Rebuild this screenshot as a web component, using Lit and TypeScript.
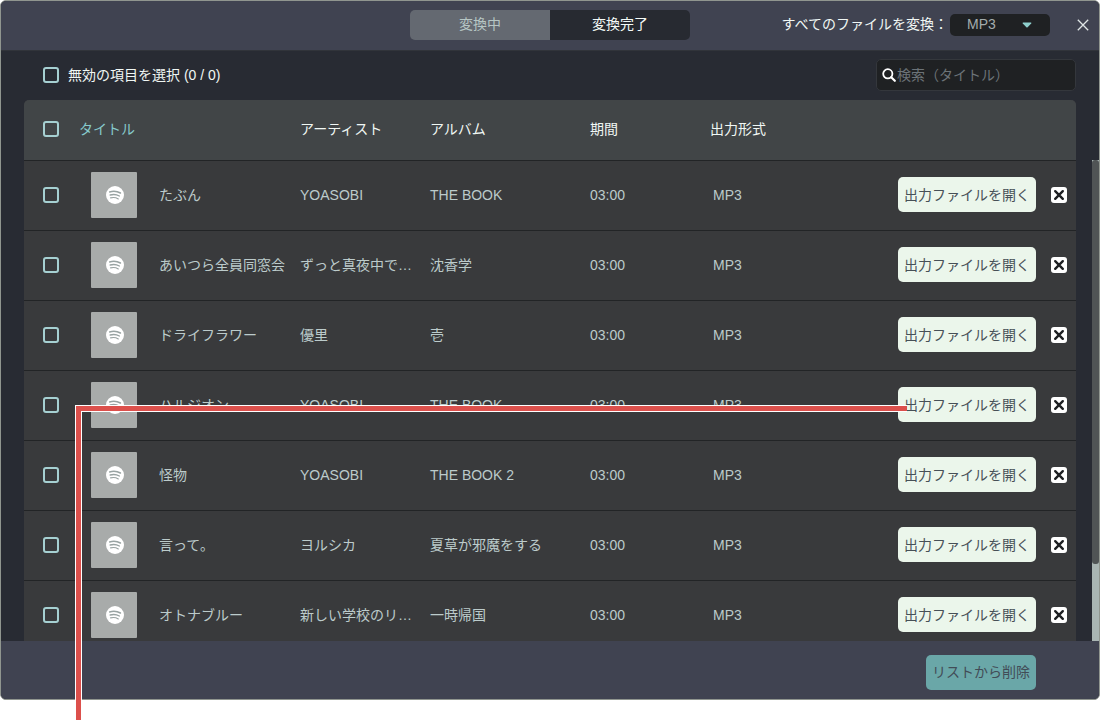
import { LitElement, html, css } from "lit";
import { customElement, state } from "lit/decorators.js";

interface Track {
  title: string;
  artist: string;
  album: string;
  duration: string;
  format: string;
}

const TRACKS: Track[] = [
  { title: "たぶん", artist: "YOASOBI", album: "THE BOOK", duration: "03:00", format: "MP3" },
  { title: "あいつら全員同窓会", artist: "ずっと真夜中で…", album: "沈香学", duration: "03:00", format: "MP3" },
  { title: "ドライフラワー", artist: "優里", album: "壱", duration: "03:00", format: "MP3" },
  { title: "ハルジオン", artist: "YOASOBI", album: "THE BOOK", duration: "03:00", format: "MP3" },
  { title: "怪物", artist: "YOASOBI", album: "THE BOOK 2", duration: "03:00", format: "MP3" },
  { title: "言って。", artist: "ヨルシカ", album: "夏草が邪魔をする", duration: "03:00", format: "MP3" },
  { title: "オトナブルー", artist: "新しい学校のリ…", album: "一時帰国", duration: "03:00", format: "MP3" },
];

@customElement("app-root")
export class AppRoot extends LitElement {
  @state() private tracks = TRACKS;

  static styles = css`
    :host {
      display: block;
      position: relative;
      box-sizing: border-box;
      height: 100vh;
      padding-bottom: 20px;
      overflow: hidden;
      background: #fff;
      font: 14px/20px "Liberation Sans", "Noto Sans CJK JP", sans-serif;
      color: #f0f7f4;
    }
    *,
    *::before,
    *::after {
      box-sizing: border-box;
    }
    button,
    input,
    select {
      margin: 0;
      font: inherit;
    }
    button {
      cursor: pointer;
    }
    svg {
      display: block;
    }

    .window {
      display: flex;
      flex-direction: column;
      height: 100%;
      overflow: hidden;
      border: 1px solid #90968f;
      border-radius: 6px;
      background: #282b33;
    }

    .titlebar {
      display: grid;
      grid-template-columns: 1fr auto 1fr;
      align-items: center;
      flex: none;
      height: 49px;
      padding-bottom: 2px;
      background: #404351;
    }
    .tabs {
      grid-column: 2;
      display: flex;
      height: 30px;
      border-radius: 5px;
      overflow: hidden;
    }
    .tab {
      width: 140px;
      padding: 0 0 2px;
      border: 0;
      background: #646971;
      color: #b6c6c4;
    }
    .tab.active {
      background: #272a31;
      color: #f4faf7;
    }
    .convert {
      display: flex;
      align-items: center;
      justify-content: flex-end;
      padding-right: 7px;
    }
    .convert label {
      margin-right: 2px;
      padding-bottom: 2px;
    }
    .picker {
      display: grid;
      align-items: center;
      width: 100px;
    }
    .picker > * {
      grid-area: 1 / 1;
    }
    .picker select {
      appearance: none;
      height: 22px;
      padding: 0 17px 2px;
      border: 0;
      border-radius: 5px;
      background: #1f2123;
      color: #a3acad;
    }
    .picker svg {
      justify-self: end;
      margin-right: 18px;
      pointer-events: none;
    }
    .close {
      margin-left: 24px;
      padding: 3px;
      border: 0;
      background: none;
      color: #dfe6e6;
    }

    .toolbar {
      display: flex;
      align-items: center;
      justify-content: space-between;
      flex: none;
      height: 50px;
      padding: 0 23px 2px 42px;
      border-top: 1px solid #31343a;
    }
    .select-all {
      display: flex;
      align-items: center;
      gap: 9px;
    }
    .check {
      appearance: none;
      display: block;
      flex: none;
      width: 16px;
      height: 16px;
      border: 2px solid #a6d0d2;
      border-radius: 3px;
    }
    .check:checked {
      background: #6aa8a9;
    }
    .search {
      display: flex;
      align-items: center;
      gap: 1px;
      width: 200px;
      height: 32px;
      padding: 0 5px;
      border: 1px solid #34373c;
      border-radius: 5px;
      background: #1f2123;
    }
    .search input {
      flex: 1;
      min-width: 0;
      padding: 0;
      border: 0;
      outline: 0;
      background: none;
      color: #d5dcdc;
    }
    .search input::placeholder {
      color: #6c7378;
      opacity: 1;
    }

    .body {
      display: flex;
      flex: 1;
      gap: 16px;
      min-height: 0;
      padding-left: 23px;
    }
    .list {
      flex: 1;
      min-width: 0;
      overflow: hidden;
      border-radius: 5px 5px 0 0;
      background: #393a3c;
    }
    table {
      width: 100%;
      table-layout: fixed;
      border-spacing: 0;
    }
    .col-check {
      width: 55px;
    }
    .col-title {
      width: 221px;
    }
    .col-artist {
      width: 130px;
    }
    .col-album {
      width: 160px;
    }
    .col-duration {
      width: 120px;
    }
    .col-action {
      width: 180px;
    }
    th,
    td {
      padding: 0 0 2px;
      text-align: left;
      vertical-align: middle;
      white-space: nowrap;
    }
    th {
      height: 60px;
      background: #414547;
      font-weight: 400;
    }
    th.sorted {
      color: #86c9cb;
    }
    td {
      height: 70px;
      border-top: 1px solid #222426;
      color: #bccbcb;
    }
    .check-cell {
      padding-left: 19px;
    }
    .format {
      padding-left: 3px;
    }
    .song {
      display: flex;
      align-items: center;
      gap: 22px;
      padding-left: 12px;
    }
    .cover {
      display: grid;
      place-items: center;
      width: 46px;
      height: 46px;
      border-radius: 1px;
      background: #a8abaa;
    }
    .actions {
      display: flex;
      align-items: center;
      justify-content: flex-end;
      gap: 15px;
      padding-right: 9px;
    }
    .btn {
      height: 35px;
      padding: 0 6px;
      border: 0;
      border-radius: 5px;
      background: #ebf6eb;
      color: #475057;
      white-space: nowrap;
    }
    .remove {
      padding: 0;
      border: 0;
      background: none;
    }

    .scrollbar {
      display: flex;
      flex: none;
      width: 7px;
      margin-top: 60px;
      background: #a9b5b3;
    }
    .thumb {
      width: 100%;
      height: 84%;
      border-radius: 3px;
      background: #505455;
    }

    .footer {
      display: flex;
      align-items: center;
      justify-content: flex-end;
      flex: none;
      height: 58px;
      padding: 4px 63px 0 0;
      background: #404351;
    }
    .btn.delete {
      background: #6aa7a8;
      color: #424c57;
    }

    .callout {
      position: absolute;
      top: 405px;
      right: 193px;
      bottom: 0;
      left: 75px;
      border: solid #fff;
      border-width: 1px 0 0 1px;
      pointer-events: none;
    }
    .callout-line {
      height: 100%;
      border: solid #dc504c;
      border-width: 5px 0 0 5px;
    }
    .callout-edge {
      height: 100%;
      border: solid #fff;
      border-width: 1px 0 0 1px;
    }
  `;

  private renderCover() {
    return html`<span class="cover">
      <svg width="20" height="20" viewBox="0 0 20 20" aria-hidden="true">
        <circle cx="11" cy="10" r="9" fill="#fff" />
        <g fill="none" stroke="#98a3a2" stroke-linecap="round">
          <path d="M5.7 6.9c3.6-1 7.6-.6 10.7 1.1" stroke-width="1.6" />
          <path d="M6.2 10c3.2-.9 6.5-.5 9.2 1" stroke-width="1.4" />
          <path d="M6.6 12.9c2.7-.7 5.4-.4 7.7 1" stroke-width="1.2" />
        </g>
      </svg>
    </span>`;
  }

  private remove(track: Track) {
    this.tracks = this.tracks.filter((t) => t !== track);
  }

  private renderRow(track: Track) {
    return html`<tr>
      <td class="check-cell"><input class="check" type="checkbox" aria-label=${track.title} /></td>
      <td><div class="song">${this.renderCover()}<span>${track.title}</span></div></td>
      <td>${track.artist}</td>
      <td>${track.album}</td>
      <td>${track.duration}</td>
      <td class="format">${track.format}</td>
      <td>
        <div class="actions">
          <button class="btn">出力ファイルを開く</button>
          <button class="remove" aria-label="削除" @click=${() => this.remove(track)}>
            <svg width="16" height="16" viewBox="0 0 16 16">
              <rect width="16" height="16" rx="3" fill="#fff" />
              <path d="M4.2 4.2l7.6 7.6M11.8 4.2l-7.6 7.6" stroke="#1d1f22" stroke-width="2.4" stroke-linecap="round" />
            </svg>
          </button>
        </div>
      </td>
    </tr>`;
  }

  render() {
    return html`
      <main class="window">
        <header class="titlebar">
          <div class="tabs">
            <button class="tab">変換中</button>
            <button class="tab active">変換完了</button>
          </div>
          <div class="convert">
            <label for="format">すべてのファイルを変換：</label>
            <div class="picker">
              <select id="format">
                <option>MP3</option>
              </select>
              <svg width="10" height="6" viewBox="0 0 10 6" aria-hidden="true">
                <path d="M1 .5h8q.8.3.2 1L5.6 5.2q-.6.5-1.2 0L.8 1.5Q.2.8 1 .5z" fill="#8fd0cd" />
              </svg>
            </div>
            <button class="close" aria-label="閉じる">
              <svg width="12" height="12" viewBox="0 0 12 12">
                <path d="M.8.8l10.4 10.4M11.2.8L.8 11.2" stroke="currentColor" stroke-width="1.3" />
              </svg>
            </button>
          </div>
        </header>

        <div class="toolbar">
          <label class="select-all"><input class="check" type="checkbox" />無効の項目を選択 (0 / 0)</label>
          <div class="search">
            <svg width="14" height="14" viewBox="0 0 14 14" aria-hidden="true">
              <circle cx="5.8" cy="5.8" r="4.6" fill="none" stroke="#fff" stroke-width="1.8" />
              <path d="M9.2 9.2l3.6 3.6" stroke="#fff" stroke-width="2.2" stroke-linecap="round" />
            </svg>
            <input type="text" placeholder="検索（タイトル）" aria-label="検索（タイトル）" />
          </div>
        </div>

        <div class="body">
          <div class="list">
            <table>
              <colgroup>
                <col class="col-check" />
                <col class="col-title" />
                <col class="col-artist" />
                <col class="col-album" />
                <col class="col-duration" />
                <col />
                <col class="col-action" />
              </colgroup>
              <thead>
                <tr>
                  <th class="check-cell"><input class="check" type="checkbox" aria-label="タイトル" /></th>
                  <th class="sorted">タイトル</th>
                  <th>アーティスト</th>
                  <th>アルバム</th>
                  <th>期間</th>
                  <th>出力形式</th>
                  <th></th>
                </tr>
              </thead>
              <tbody>
                ${this.tracks.map((t) => this.renderRow(t))}
              </tbody>
            </table>
          </div>
          <div class="scrollbar"><div class="thumb"></div></div>
        </div>

        <footer class="footer">
          <button class="btn delete">リストから削除</button>
        </footer>
      </main>

      <div class="callout">
        <div class="callout-line"><div class="callout-edge"></div></div>
      </div>
    `;
  }
}
